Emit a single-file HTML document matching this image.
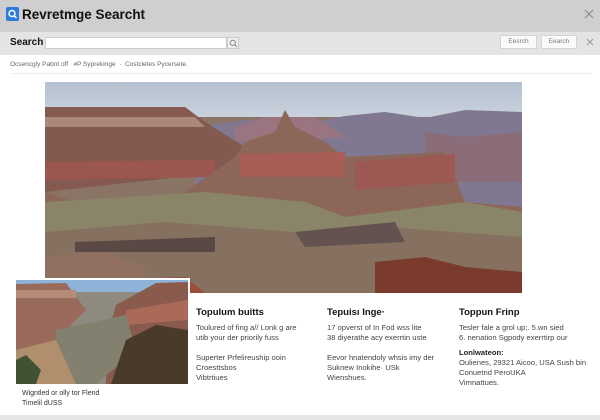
<!DOCTYPE html>
<html><head><meta charset="utf-8"><style>
*{margin:0;padding:0;box-sizing:border-box}
body{width:600px;height:420px;overflow:hidden;background:#e6e6e6;font-family:"Liberation Sans",sans-serif;position:relative}
.abs{position:absolute}
.t{font-size:7.6px;color:#444;line-height:10px}
h4{font-size:9.5px;color:#111;font-weight:bold;margin-bottom:5px}
</style></head><body>
<div class="abs" style="left:0;top:0;width:600px;height:32px;background:#cfcfcf"></div>
<div class="abs" style="left:6px;top:7px;width:13px;height:14px;background:#2d7bd8;border-radius:2px"></div>
<svg class="abs" style="left:6px;top:7px" width="13" height="14"><circle cx="6" cy="6.5" r="3" fill="none" stroke="#fff" stroke-width="1.4"/><line x1="8.2" y1="8.8" x2="10.5" y2="11" stroke="#fff" stroke-width="1.5"/></svg>
<div class="abs" style="left:22px;top:7px;font-size:13.5px;font-weight:bold;color:#111">Revretmge Searcht</div>
<svg class="abs" style="left:584px;top:9px" width="10" height="10"><path d="M1 1L9 9M9 1L1 9" stroke="#888" stroke-width="1"/></svg>
<div class="abs" style="left:0;top:32px;width:600px;height:23px;background:#e4e4e4"></div>
<div class="abs" style="left:10px;top:37px;font-size:10px;font-weight:bold;color:#111">Search</div>
<div class="abs" style="left:45px;top:37px;width:182px;height:12px;background:#fff;border:1px solid #ccc"></div>
<div class="abs" style="left:227px;top:37px;width:12px;height:12px;background:#f0f0f0;border:1px solid #ccc"></div>
<svg class="abs" style="left:229px;top:39px" width="9" height="9"><circle cx="3.8" cy="3.8" r="2.6" fill="none" stroke="#888"/><line x1="5.8" y1="5.8" x2="8" y2="8" stroke="#888"/></svg>
<div class="abs" style="left:500px;top:35px;width:37px;height:14px;background:#fafafa;border:1px solid #d4d4d4;font-size:6.5px;color:#777;text-align:center;line-height:12px">Eesrch</div>
<div class="abs" style="left:541px;top:35px;width:36px;height:14px;background:#fafafa;border:1px solid #d4d4d4;font-size:6.5px;color:#777;text-align:center;line-height:12px">Eearch</div>
<svg class="abs" style="left:586px;top:38px" width="8" height="8"><path d="M1 1L7 7M7 1L1 7" stroke="#999" stroke-width="1"/></svg>
<div class="abs" style="left:0;top:55px;width:600px;height:360px;background:#fff"></div>
<div class="abs" style="left:10px;top:61px;font-size:6.5px;color:#666">Ocsencgly Pabnt off &nbsp; ≠P Syprekinge &nbsp;· &nbsp;Costcletes Pycersete.</div>
<div class="abs" style="left:10px;top:73px;width:582px;height:1px;background:#eee"></div>
<svg class="abs" style="left:45px;top:82px" width="477" height="211" viewBox="0 0 477 211" preserveAspectRatio="none">
<defs><linearGradient id="sky" x1="0" y1="0" x2="0" y2="1"><stop offset="0" stop-color="#b4c0d0"/><stop offset="1" stop-color="#c9d2dc"/></linearGradient></defs>
<rect width="477" height="211" fill="#8a7466"/>
<rect width="477" height="35" fill="url(#sky)"/>
<path d="M150 45L200 38 230 36 260 42 300 34 340 30 380 36 420 28 477 30 477 130 150 130Z" fill="#7f7890"/>
<path d="M190 45L220 35 270 35 300 55 190 60Z" fill="#9a7480"/>
<path d="M0 25L140 25 160 40 200 65 180 90 0 110Z" fill="#84594f"/>
<path d="M0 35L150 35 160 45 0 45Z" fill="#a9877a"/>
<path d="M0 80L170 78 170 95 0 98Z" fill="#9c5650"/>
<path d="M380 50L420 55 477 50 477 100 380 100Z" fill="#8a6d78"/>
<path d="M140 110L190 75 200 60 230 50 240 28 250 45 280 60 300 75 400 70 410 95 420 120 477 125 477 211 0 211 0 110 60 130Z" fill="#8c6658"/>
<path d="M195 72L300 70 300 95 195 95Z" fill="#a85e56"/>
<path d="M310 80L410 72 410 100 310 108Z" fill="#9c5852"/>
<path d="M0 120L160 110 260 120 300 135 420 120 477 130 477 160 0 165Z" fill="#8a8568"/>
<path d="M0 150L120 140 250 150 340 145 477 155 477 211 0 211Z" fill="#86705f"/>
<path d="M30 160L170 155 170 170 30 170Z" fill="#5a4844"/>
<path d="M250 150L350 140 360 160 260 165Z" fill="#645250"/>
<path d="M330 180L380 175 420 185 477 190 477 211 330 211Z" fill="#7a3a2c"/>
<path d="M0 175L60 170 100 185 100 211 0 211Z" fill="#917062"/>
<path d="M0 200L140 195 160 211 0 211Z" fill="#a04a3a"/>
</svg>
<div class="abs" style="left:14px;top:278px;width:176px;height:108px;background:#fff"></div>
<svg class="abs" style="left:16px;top:280px" width="172" height="104" viewBox="0 0 172 104" preserveAspectRatio="none">
<rect width="172" height="104" fill="#8e8a80"/>
<rect width="172" height="12" fill="#8fb2d8"/>
<path d="M0 4L50 3 70 30 40 60 0 70Z" fill="#9a6a5c"/>
<path d="M0 10L60 10 60 18 0 18Z" fill="#b48c78"/>
<path d="M100 25L140 3 172 2 172 104 90 104 90 60Z" fill="#8a5a4c"/>
<path d="M110 30L172 20 172 40 110 45Z" fill="#aa6a5a"/>
<path d="M40 50L110 35 120 70 80 104 40 104Z" fill="#838070"/>
<path d="M0 70L40 60 60 104 0 104Z" fill="#b0906c"/>
<path d="M110 60L140 45 172 50 172 104 95 104Z" fill="#4a3a2a"/>
<path d="M0 80L10 75 25 90 20 104 0 104Z" fill="#3f5232"/>
</svg>
<div class="abs t" style="left:22px;top:389px;font-size:7px;color:#333">Wigntled or olly tor Flend<br>Timelil dUSS</div>
<div class="abs" style="left:196px;top:307px;width:125px"><h4>Topulum buitts</h4><div class="t">Toulured of fing a// Lonk g are<br>utib your der priorily fuss</div><div class="t" style="margin-top:10px">Superter Prfelireuship ooin<br>Croesttsbos<br>Vibtrtiues</div></div>
<div class="abs" style="left:327px;top:307px;width:125px"><h4>Tepuisı Inge·</h4><div class="t">17 opverst of In Fod wss lite<br>38 diyerathe acy exerrtin uste</div><div class="t" style="margin-top:10px">Eevor hnatendoly whsis imy der<br>Suknew Inokihe· USk<br>Wienshues.</div></div>
<div class="abs" style="left:459px;top:307px;width:140px"><h4>Toppun Frinp</h4><div class="t">Tesler fale a grol up;. 5.wn sied<br>6. nenation Sgpody exerrtirp our</div><div class="t" style="margin-top:5px;color:#222;font-weight:bold">Lonlwateon:</div><div class="t">Oulienes, 29321 Aicoo, USA Sush bin<br>Conuetnd PeroUKA<br>Vimnattues.</div></div>
</body></html>
